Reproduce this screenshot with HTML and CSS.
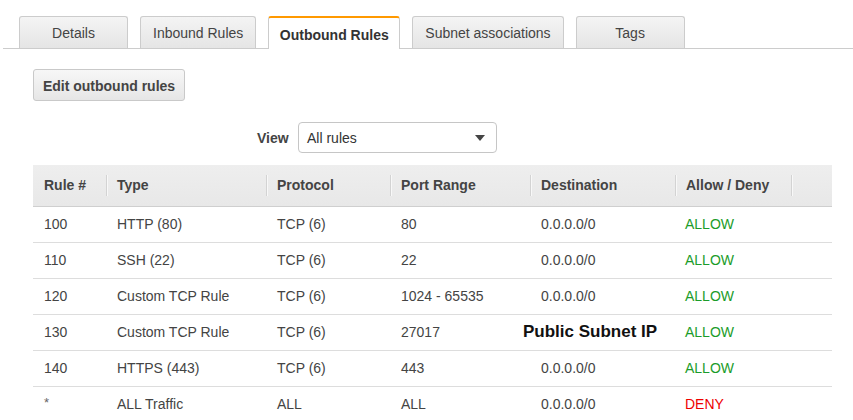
FILE: index.html
```html
<!DOCTYPE html>
<html>
<head>
<meta charset="utf-8">
<link rel="stylesheet" href="styles.css">
</head>
<body>
<div class="page">
  <div class="tabs">
    <div class="tab">Details</div>
    <div class="tab">Inbound Rules</div>
    <div class="tab active">Outbound Rules</div>
    <div class="tab">Subnet associations</div>
    <div class="tab">Tags</div>
  </div>
  <div class="content">
    <button class="btn">Edit outbound rules</button>
    <div class="view-row">
      <span class="view-label">View</span>
      <div class="select"><span>All rules</span><span class="arrow"></span></div>
    </div>
    <table class="rules">
      <colgroup>
        <col style="width:73px"><col style="width:160px"><col style="width:124px"><col style="width:140px"><col style="width:145px"><col style="width:116px"><col style="width:41px">
      </colgroup>
      <thead>
        <tr>
          <th><span>Rule #</span></th>
          <th><span>Type</span></th>
          <th><span>Protocol</span></th>
          <th><span>Port Range</span></th>
          <th><span>Destination</span></th>
          <th><span>Allow / Deny</span></th>
          <th class="last"><span></span></th>
        </tr>
      </thead>
      <tbody>
        <tr><td>100</td><td>HTTP (80)</td><td>TCP (6)</td><td>80</td><td>0.0.0.0/0</td><td class="allow">ALLOW</td><td></td></tr>
        <tr><td>110</td><td>SSH (22)</td><td>TCP (6)</td><td>22</td><td>0.0.0.0/0</td><td class="allow">ALLOW</td><td></td></tr>
        <tr><td>120</td><td>Custom TCP Rule</td><td>TCP (6)</td><td>1024 - 65535</td><td>0.0.0.0/0</td><td class="allow">ALLOW</td><td></td></tr>
        <tr><td>130</td><td>Custom TCP Rule</td><td>TCP (6)</td><td>27017</td><td><span class="note">Public Subnet IP</span></td><td class="allow">ALLOW</td><td></td></tr>
        <tr><td>140</td><td>HTTPS (443)</td><td>TCP (6)</td><td>443</td><td>0.0.0.0/0</td><td class="allow">ALLOW</td><td></td></tr>
        <tr><td class="star">*</td><td>ALL Traffic</td><td>ALL</td><td>ALL</td><td>0.0.0.0/0</td><td class="deny">DENY</td><td></td></tr>
      </tbody>
    </table>
  </div>
</div>
</body>
</html>
```
FILE: styles.css
```css
* { box-sizing: border-box; }
html, body { margin: 0; padding: 0; background: #fff; }
body {
  font-family: "Liberation Sans", Arial, Helvetica, sans-serif;
  font-size: 14px;
  color: #444;
}
.page { padding-top: 16px; }
.tabs {
  display: flex;
  gap: 12px;
  margin-left: 3px;
  padding-left: 16px;
  border-bottom: 1px solid #ccc;
  height: 33px;
}
.tab {
  min-width: 109px;
  height: 32px;
  padding: 0 12px;
  display: flex;
  align-items: center;
  justify-content: center;
  border: 1px solid #ccc;
  border-bottom: none;
  border-radius: 3px 3px 0 0;
  background: linear-gradient(#f4f4f4, #e5e5e5);
  color: #444;
  line-height: 1;
  white-space: nowrap;
}
.tab.active {
  background: #fff;
  border-top: 2px solid #f90;
  height: 33px;
  font-weight: bold;
  color: #333;
  padding: 3px 10px 0;
  width: 132px;
  min-width: 0;
}
.content { padding: 20px 0 0 33px; }
.btn {
  display: block;
  width: 152px;
  height: 32px;
  border: 1px solid #c9c9c9;
  border-radius: 3px;
  background: linear-gradient(#f7f7f7, #e6e6e6);
  font-family: inherit;
  font-size: 14px;
  font-weight: bold;
  color: #444;
  padding: 2px 0 0;
  cursor: pointer;
}
.view-row {
  display: flex;
  align-items: center;
  margin-top: 21px;
  padding-left: 224px;
  height: 31px;
}
.view-label {
  font-weight: bold;
  color: #444;
  width: 41px;
  padding-right: 11px;
  text-align: right;
}
.select {
  width: 199px;
  height: 31px;
  border: 1px solid #c6c6c6;
  border-radius: 4px;
  display: flex;
  align-items: center;
  justify-content: space-between;
  padding: 0 11px 0 8px;
  color: #333;
}
.arrow {
  width: 0; height: 0;
  border-left: 5px solid transparent;
  border-right: 5px solid transparent;
  border-top: 6px solid #444;
}
.rules {
  margin-top: 12px;
  border-collapse: collapse;
  table-layout: fixed;
  width: 799px;
}
.rules th {
  height: 41px;
  background: linear-gradient(#eeeeee, #e8e8e8);
  border-bottom: 1px solid #cfcfcf;
  text-align: left;
  font-weight: bold;
  color: #444;
  padding: 1px 0 0;
}
.rules th span {
  display: block;
  border-left: 1px solid #d3d3d3;
  box-shadow: inset 1px 0 0 #f8f8f8;
  padding-left: 10px;
  height: 21px;
  line-height: 21px;
}
.rules th:first-child span { border-left-color: transparent; box-shadow: none; padding-left: 10px; }
.rules td {
  height: 36px;
  padding: 0 0 0 11px;
  border-bottom: 1px solid #ddd;
  color: #444;
  white-space: nowrap;
}
.rules td.star { color: #666; vertical-align: middle; font-size: 13px; padding-bottom: 3px; }
.rules td.allow { color: #1b9c2a; padding-left: 10px; }
.rules td.deny { color: #e00; padding-left: 10px; }
.note {
  display: inline-block;
  margin-left: -18px;
  font-size: 17px;
  font-weight: bold;
  color: #111;
}
```
